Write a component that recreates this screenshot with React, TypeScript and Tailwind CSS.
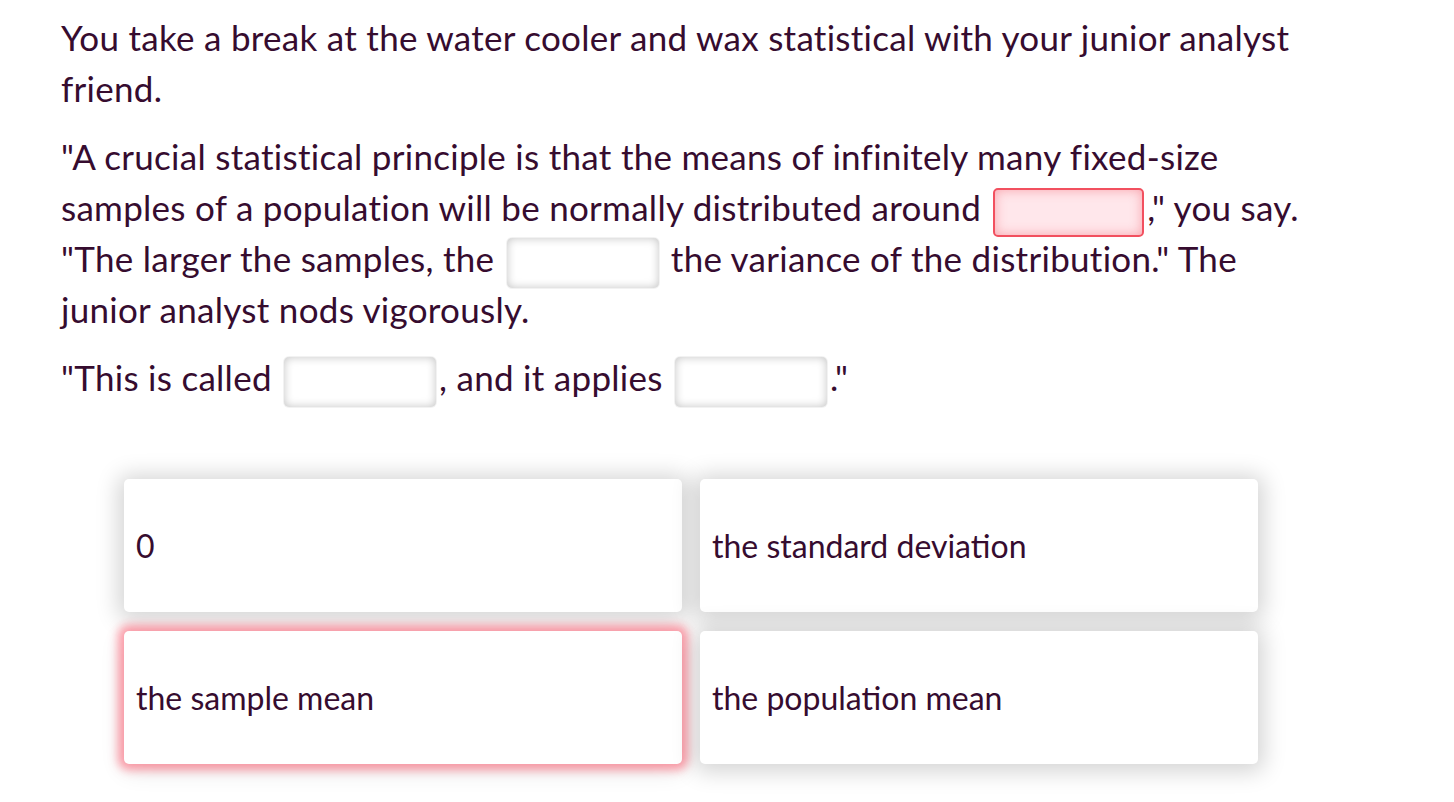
const ink = "text-[#360c2f]";

function Blank({ wrong = false }: { wrong?: boolean }) {
  return (
    <span
      className={
        wrong
          ? "mx-[3px] -my-[10px] inline-block h-[49px] w-[151px] rounded-[5px] border-2 border-[#f2505f] bg-[#ffe7eb] align-middle shadow-[inset_0_0_12px_rgba(242,80,95,0.45)]"
          : "mx-[3px] -my-[10px] inline-block h-[50px] w-[152px] rounded-[5px] bg-white align-middle shadow-[inset_0_0_10px_rgba(0,0,0,0.24),0_0_0_1px_rgba(0,0,0,0.05)]"
      }
    />
  );
}

function Choice({ label, wrong = false }: { label: string; wrong?: boolean }) {
  return (
    <button
      className={
        wrong
          ? "flex h-[133px] items-center rounded-[5px] bg-white px-3 text-left text-[32px] shadow-[0_0_10px_6px_rgba(255,95,115,0.6),0_6px_24px_rgba(0,0,0,0.12)]"
          : "flex h-[133px] items-center rounded-[5px] bg-white px-3 text-left text-[32px] shadow-[0_2px_22px_6px_rgba(0,0,0,0.17)]"
      }
    >
      {label}
    </button>
  );
}

export default function App() {
  return (
    <div
      className={`min-h-screen bg-white ${ink}`}
      style={{ fontFamily: "Lato, 'Open Sans', sans-serif" }}
    >
      <div className="w-[1323px] pl-[61px] pt-[12px] text-[35px] leading-[51px] tracking-[0.28px]">
        <p>
          You take a break at the water cooler and wax statistical with your junior analyst friend.
        </p>
        <p className="mt-[17px]">
          "A crucial statistical principle is that the means of infinitely many fixed-size samples of a
          population will be normally distributed around <Blank wrong />," you say. "The larger the
          samples, the <Blank /> the variance of the distribution." The junior analyst nods vigorously.
        </p>
        <p className="mt-[17px]">
          "This is called <Blank />, and it applies <Blank />."
        </p>
      </div>
      <div className="ml-[124px] mt-[76px] grid w-[1134px] grid-cols-2 gap-x-[18px] gap-y-[19px]">
        <Choice label="0" />
        <Choice label="the standard deviation" />
        <Choice label="the sample mean" wrong />
        <Choice label="the population mean" />
      </div>
    </div>
  );
}
